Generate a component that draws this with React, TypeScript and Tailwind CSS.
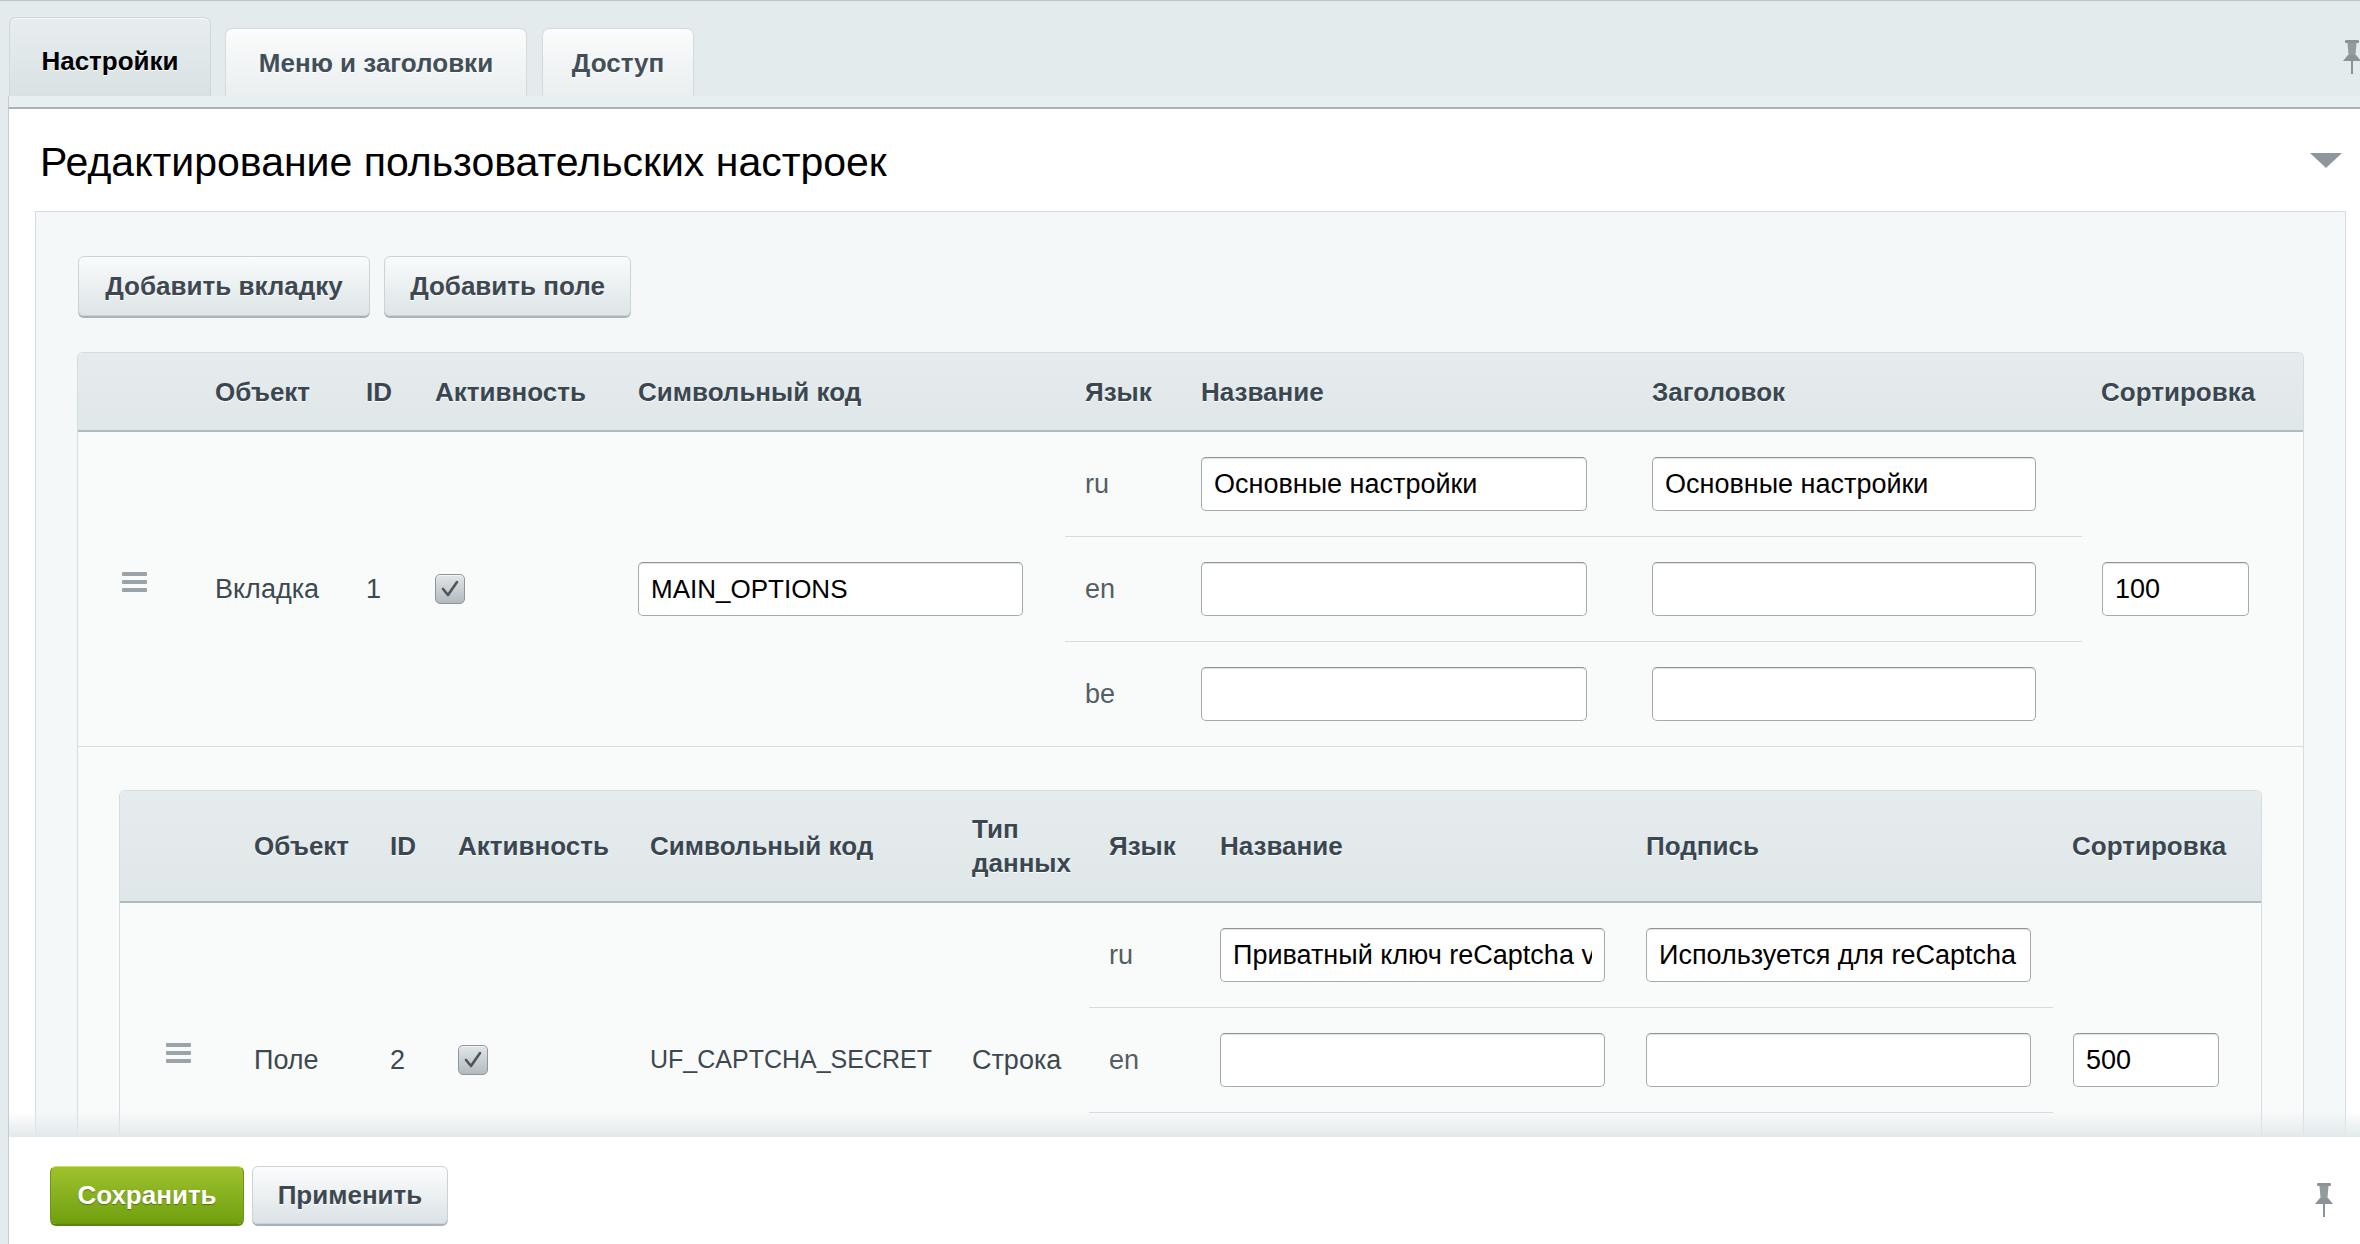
import React from 'react';

const FONT = "font-['Liberation_Sans',Arial,sans-serif]";

type LangRow = { lang: string; name: string; caption: string };

const tabRows: LangRow[] = [
  { lang: 'ru', name: 'Основные настройки', caption: 'Основные настройки' },
  { lang: 'en', name: '', caption: '' },
  { lang: 'be', name: '', caption: '' },
];

const fieldRows: LangRow[] = [
  { lang: 'ru', name: 'Приватный ключ reCaptcha v3', caption: 'Используется для reCaptcha' },
  { lang: 'en', name: '', caption: '' },
  { lang: 'be', name: '', caption: '' },
];

function Pin() {
  return (
    <svg width="20" height="34" viewBox="0 0 20 34" className="block">
      <rect x="3" y="0" width="14" height="3" rx="1" fill="#8b9397" />
      <polygon points="5.5,3 14.5,3 13.5,15 6.5,15" fill="#939b9f" />
      <polygon points="6,15 14,15 19,21 1,21" fill="#8b9397" />
      <rect x="9" y="21" width="2" height="13" fill="#8b9397" />
    </svg>
  );
}

function Grip() {
  return (
    <div className="flex flex-col gap-[4px] w-[25px] mb-[14px]">
      <span className="h-[4px] rounded-[1px] bg-[#9aa3a8]" />
      <span className="h-[4px] rounded-[1px] bg-[#9aa3a8]" />
      <span className="h-[4px] rounded-[1px] bg-[#9aa3a8]" />
    </div>
  );
}

function Checkbox() {
  return (
    <div className="w-[30px] h-[30px] rounded-[5px] border border-[#8d969a] bg-gradient-to-b from-[#e2e6e8] to-[#b3babd] shadow-[inset_0_1px_0_#f4f6f7] flex items-center justify-center">
      <svg width="26" height="26" viewBox="0 0 26 26">
        <polyline points="6,13 11,19 20,6" fill="none" stroke="#4c565d" strokeWidth="2.6" strokeLinecap="round" strokeLinejoin="round" />
      </svg>
    </div>
  );
}

function TextInput({ value, width, size = 'text-[27px]' }: { value: string; width: string; size?: string }) {
  return (
    <input
      readOnly
      value={value}
      className={`${width} h-[54px] bg-white rounded-[5px] border border-[#a3abaf] border-t-[#8c959a] shadow-[inset_0_1px_1px_rgba(0,0,0,0.12)] px-[12px] ${size} text-black outline-none ${FONT}`}
    />
  );
}

function GrayButton({ label, width }: { label: string; width: string }) {
  return (
    <button className={`${width} h-[60px] rounded-[6px] border border-[#cbd3d6] bg-gradient-to-b from-[#f9fbfb] to-[#dde5e7] shadow-[0_2px_0_#a9b3b7] text-[26px] font-bold text-[#3d4850] [text-shadow:0_1px_0_#fff]`}>
      {label}
    </button>
  );
}

export default function App() {
  return (
    <div className={`h-[1244px] w-full overflow-hidden bg-[#e4ebed] border-t border-[#bfc6c9] flex flex-col ${FONT}`}>
      <div className="flex-1 min-h-0 overflow-hidden relative flex flex-col">
        {/* tabs */}
        <div className="h-[95px] shrink-0 flex items-end pl-[9px]">
          <div className="w-[202px] h-[79px] mr-[14px] rounded-t-[7px] border border-b-0 border-[#cfd8db] bg-gradient-to-b from-[#e8eef0] to-[#d9e1e3] shadow-[inset_0_1px_0_#f7f9fa] flex items-center justify-center pt-[8px] text-[26px] font-bold text-black [text-shadow:0_1px_0_#fff]">
            Настройки
          </div>
          <div className="w-[302px] h-[68px] mr-[15px] rounded-t-[7px] border border-b-0 border-[#d2dadd] bg-gradient-to-b from-[#fbfcfc] to-[#eaeff0] flex items-center justify-center pt-[2px] text-[26px] font-bold text-[#434f58] [text-shadow:0_1px_0_#fff]">
            Меню и заголовки
          </div>
          <div className="w-[152px] h-[68px] rounded-t-[7px] border border-b-0 border-[#d2dadd] bg-gradient-to-b from-[#fbfcfc] to-[#eaeff0] flex items-center justify-center pt-[2px] text-[26px] font-bold text-[#434f58] [text-shadow:0_1px_0_#fff]">
            Доступ
          </div>
          <div className="ml-auto self-start mt-[39px] mr-[-2px]">
            <Pin />
          </div>
        </div>
        <div className="ml-[8px] h-[13px] shrink-0 border-l border-[#c3cdd0] bg-[#e8eff0] border-b-2 border-b-[#a9b3b6]" />

        {/* content */}
        <div className="ml-[8px] flex-1 min-h-0 border-l border-[#c3cdd0] bg-white flex flex-col">
          <div className="h-[102px] shrink-0 flex items-center justify-between pl-[31px] pr-[18px]">
            <h1 className="pt-[5px] text-[41px] font-normal text-black">Редактирование пользовательских настроек</h1>
            <svg width="32" height="15" viewBox="0 0 32 15">
              <polygon points="0,0 32,0 16,15" fill="#8e979b" />
            </svg>
          </div>

          <div className="ml-[26px] mr-[14px] flex-1 border border-[#d3dde0] bg-[#f4f8f9] px-[41px] pt-[44px]">
            <div className="flex gap-[14px] ml-[1px]">
              <GrayButton label="Добавить вкладку" width="w-[292px]" />
              <GrayButton label="Добавить поле" width="w-[247px]" />
            </div>

            {/* outer table */}
            <div className="mt-[36px] border-x border-t border-[#d3dce0] rounded-t-[6px] bg-[#f9fbfb]">
              <div className="h-[79px] grid grid-cols-[137px_151px_69px_203px_427px_136px_451px_430px_1fr] items-center rounded-t-[6px] bg-gradient-to-b from-[#e6ecee] to-[#e0e7e9] border-b-2 border-[#b0babe] pt-[2px] text-[26px] font-bold text-[#3b4750] [text-shadow:0_1px_0_#fff]">
                <span />
                <span>Объект</span>
                <span>ID</span>
                <span>Активность</span>
                <span>Символьный код</span>
                <span className="pl-[20px]">Язык</span>
                <span>Название</span>
                <span>Заголовок</span>
                <span className="pl-[19px]">Сортировка</span>
              </div>

              <div className="grid grid-cols-[137px_151px_69px_203px_427px_136px_451px_430px_1fr] items-center border-b border-[#d3dce0] text-[27px] text-[#3d4850]">
                <div className="pl-[44px]"><Grip /></div>
                <span>Вкладка</span>
                <span>1</span>
                <div><Checkbox /></div>
                <div><TextInput value="MAIN_OPTIONS" width="w-[385px]" size="text-[26px]" /></div>
                <div className="col-span-3 flex flex-col">
                  {tabRows.map((r, i) => (
                    <div key={r.lang} className={`grid grid-cols-[136px_451px_430px] items-center ${i < 2 ? 'border-b border-[#d3dce0] h-[105px]' : 'h-[104px]'}`}>
                      <span className="pl-[20px] text-[#545e65]">{r.lang}</span>
                      <div><TextInput value={r.name} width="w-[386px]" /></div>
                      <div><TextInput value={r.caption} width="w-[384px]" /></div>
                    </div>
                  ))}
                </div>
                <div className="pl-[20px]"><TextInput value="100" width="w-[147px]" /></div>
              </div>

              <div className="px-[41px] pt-[43px]">
                {/* nested table */}
                <div className="border-x border-t border-[#d3dce0] rounded-t-[6px] bg-[#f9fbfb]">
                  <div className="h-[112px] grid grid-cols-[134px_136px_68px_192px_322px_117px_131px_426px_407px_1fr] items-center rounded-t-[6px] bg-gradient-to-b from-[#e6ecee] to-[#e0e7e9] border-b-2 border-[#b0babe] text-[26px] font-bold text-[#3b4750] [text-shadow:0_1px_0_#fff] leading-[34px]">
                    <span />
                    <span>Объект</span>
                    <span>ID</span>
                    <span>Активность</span>
                    <span>Символьный код</span>
                    <span>Тип<br />данных</span>
                    <span className="pl-[20px]">Язык</span>
                    <span>Название</span>
                    <span>Подпись</span>
                    <span className="pl-[19px]">Сортировка</span>
                  </div>

                  <div className="grid grid-cols-[134px_136px_68px_192px_322px_117px_964px_1fr] items-center text-[27px] text-[#3d4850]">
                    <div className="pl-[46px]"><Grip /></div>
                    <span>Поле</span>
                    <span>2</span>
                    <div><Checkbox /></div>
                    <span className="text-[25px]">UF_CAPTCHA_SECRET</span>
                    <span>Строка</span>
                    <div className="flex flex-col">
                      {fieldRows.map((r, i) => (
                        <div key={r.lang} className={`grid grid-cols-[131px_426px_407px] items-center ${i < 2 ? 'border-b border-[#d3dce0] h-[105px]' : 'h-[104px]'}`}>
                          <span className="pl-[20px] text-[#545e65]">{r.lang}</span>
                          <div><TextInput value={r.name} width="w-[385px]" /></div>
                          <div><TextInput value={r.caption} width="w-[385px]" /></div>
                        </div>
                      ))}
                    </div>
                    <div className="pl-[20px]"><TextInput value="500" width="w-[146px]" /></div>
                  </div>
                </div>
              </div>
            </div>
          </div>
        </div>

        {/* fade over content above the footer */}
        <div className="pointer-events-none absolute bottom-0 left-[9px] right-0 h-[26px] bg-gradient-to-b from-[#eef3f4]/0 to-[#e3e9eb]" />
      </div>

      {/* footer */}
      <div className="ml-[8px] h-[107px] shrink-0 border-l border-[#c3cdd0] bg-white flex items-start pt-[29px] pl-[41px] pr-[26px]">
        <button className="w-[194px] h-[58px] rounded-[6px] border border-[#6d960f] border-t-[#c6e24c] bg-gradient-to-b from-[#9fc22d] to-[#70a00e] shadow-[0_2px_0_#5d8510] text-[26px] font-bold text-white [text-shadow:0_1px_1px_rgba(0,0,0,0.35)]">
          Сохранить
        </button>
        <button className="ml-[8px] w-[196px] h-[58px] rounded-[6px] border border-[#cbd3d6] bg-gradient-to-b from-[#fcfdfd] to-[#dbe3e6] shadow-[0_2px_0_#a9b3b7] text-[26px] font-bold text-[#3d4850] [text-shadow:0_1px_0_#fff]">
          Применить
        </button>
        <div className="ml-auto mt-[17px]">
          <Pin />
        </div>
      </div>
    </div>
  );
}
